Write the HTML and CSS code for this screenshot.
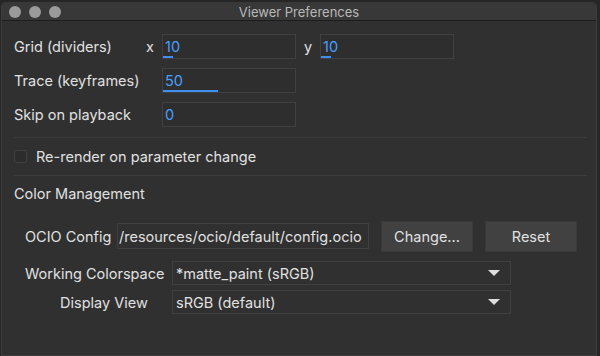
FILE: index.html
```html
<!DOCTYPE html>
<html lang="en">
<head>
  <meta charset="UTF-8">
  <title>Viewer Preferences</title>
  <link rel="stylesheet" href="styles.css">
</head>
<body>
  <div class="window">
    <div class="titlebar">
      <div class="lights">
        <span class="light"></span>
        <span class="light"></span>
        <span class="light"></span>
      </div>
      <div class="title">Viewer Preferences</div>
    </div>
    <div class="content">
      <div class="row">
        <span class="label">Grid (dividers)</span>
        <span class="axis">x</span>
        <div class="field"><span class="val">10</span><span class="bar" style="width: 10px"></span></div>
        <span class="axis axis-y">y</span>
        <div class="field"><span class="val">10</span><span class="bar" style="width: 10px"></span></div>
      </div>
      <div class="row">
        <span class="label label-wide">Trace (keyframes)</span>
        <div class="field"><span class="val">50</span><span class="bar" style="width: 55px"></span></div>
      </div>
      <div class="row">
        <span class="label label-wide">Skip on playback</span>
        <div class="field"><span class="val">0</span></div>
      </div>
      <div class="divider"></div>
      <div class="check-row">
        <span class="checkbox"></span>
        <span>Re-render on parameter change</span>
      </div>
      <div class="divider"></div>
      <div class="section">Color Management</div>
      <div class="ocio-row">
        <span class="ocio-label">OCIO Config</span>
        <div class="path">/resources/ocio/default/config.ocio</div>
        <button class="btn">Change...</button>
        <button class="btn">Reset</button>
      </div>
      <div class="combo-row">
        <span class="combo-label">Working Colorspace</span>
        <div class="combo"><span>*matte_paint (sRGB)</span><span class="arrow"></span></div>
      </div>
      <div class="combo-row">
        <span class="combo-label combo-label-short">Display View</span>
        <div class="combo"><span>sRGB (default)</span><span class="arrow"></span></div>
      </div>
    </div>
  </div>
</body>
</html>
```

FILE: styles.css
```css
* { margin: 0; padding: 0; box-sizing: border-box; }
body {
  width: 600px;
  height: 356px;
  background: #262626;
  font-family: 'Inter', 'Liberation Sans', sans-serif;
  font-size: 14.5px;
  color: #e0e0e0;
  overflow: hidden;
}
.window {
  margin: 2px 3px 0 1px;
  height: 354px;
  background: #303030;
  border: 1px solid #3d3d3d;
  border-top: none;
  border-radius: 5px 5px 0 0;
  display: flex;
  flex-direction: column;
}
.titlebar {
  height: 19px;
  background: #383838;
  border-bottom: 1px solid #1c1c1c;
  border-radius: 5px 5px 0 0;
  position: relative;
  display: flex;
  align-items: center;
}
.lights {
  display: flex;
  gap: 8px;
  padding-left: 7px;
  padding-top: 1px;
}
.light {
  width: 12px;
  height: 12px;
  border-radius: 50%;
  background: #9a9a9a;
}
.title {
  position: absolute;
  left: 0;
  right: 0;
  top: 2px;
  text-align: center;
  font-size: 13px;
  color: #b9b9b9;
}
.content {
  padding: 13px 10px 0 12px;
  display: flex;
  flex-direction: column;
}
.row {
  display: flex;
  align-items: center;
  height: 25px;
  margin-bottom: 9px;
}
.label { width: 132px; }
.label-wide { width: 148px; }
.axis { width: 16px; }
.axis-y { width: 16px; margin-left: 8px; }
.field {
  width: 134px;
  height: 25px;
  border: 1px solid #404040;
  background: #2e2e2e;
  position: relative;
  padding-left: 2px;
  display: flex;
  align-items: center;
}
.val { color: #4a9eff; }
.bar {
  position: absolute;
  left: 0;
  bottom: 0;
  height: 2px;
  background: #3f8ff0;
}
.divider {
  height: 1px;
  background: #3c3c3c;
  margin: 1px 0 0;
  width: 573px;
}
.check-row {
  display: flex;
  align-items: center;
  gap: 9px;
  height: 36px;
}
.checkbox {
  width: 13px;
  height: 13px;
  border: 1px solid #404040;
  background: #2c2c2c;
  border-radius: 2px;
}
.section {
  padding-top: 9px;
  height: 44px;
}
.ocio-row {
  display: flex;
  align-items: center;
  padding-left: 11px;
  height: 32px;
}
.ocio-label { width: 92px; }
.path {
  width: 252px;
  height: 26px;
  border: 1px solid #404040;
  padding-left: 1px;
  display: flex;
  align-items: center;
  white-space: nowrap;
  overflow: hidden;
}
.btn {
  width: 92px;
  height: 31px;
  margin-left: 12px;
  background: #414141;
  border: 1px solid #393939;
  color: #e0e0e0;
  font-family: inherit;
  font-size: 14.5px;
}
.combo-row {
  display: flex;
  align-items: center;
  height: 24px;
  margin-top: 5px;
}
.ocio-row + .combo-row { margin-top: 9px; }
.combo-label {
  width: 158px;
  padding-left: 11px;
  white-space: nowrap;
}
.combo-label-short { padding-left: 46px; }
.combo {
  width: 339px;
  height: 24px;
  border: 1px solid #404040;
  padding: 0 10px 0 3px;
  display: flex;
  align-items: center;
  justify-content: space-between;
}
.arrow {
  width: 0;
  height: 0;
  border-left: 6px solid transparent;
  border-right: 6px solid transparent;
  border-top: 6px solid #dedede;
}
```
